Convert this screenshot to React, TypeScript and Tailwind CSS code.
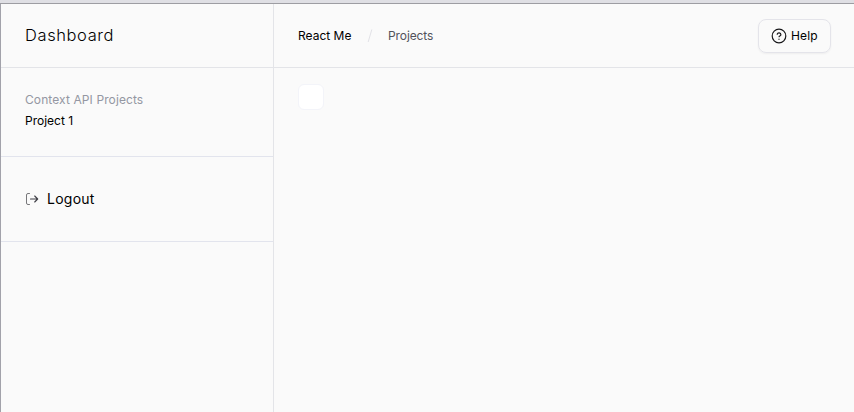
import React from "react";

function LogoutIcon() {
  return (
    <svg width="14" height="14" viewBox="0 0 14 14" fill="none" strokeLinecap="round" strokeLinejoin="round" className="shrink-0">
      <path d="M4.5 1.5H3a1.5 1.5 0 0 0-1.5 1.5v8A1.5 1.5 0 0 0 3 12.5h1.5" stroke="#77777a" />
      <path d="M5.5 7H12.7M9.7 4l3 3-3 3" stroke="#3f3f46" strokeWidth="1.1" />
    </svg>
  );
}

function HelpIcon() {
  return (
    <svg width="16" height="16" viewBox="0 0 16 16" fill="none" stroke="#18181b" strokeWidth="1.2" strokeLinecap="round" strokeLinejoin="round" className="shrink-0">
      <circle cx="8" cy="8" r="6.8" />
      <path d="M6.2 6.2a1.9 1.9 0 0 1 3.7.5c0 1.2-1.8 1.4-1.8 2" />
      <path d="M8 11.2v.1" />
    </svg>
  );
}

function Sidebar() {
  return (
    <aside className="flex w-[273px] shrink-0 flex-col border-r border-[#e3e4e8]">
      <header className="flex h-16 items-center border-b border-[#e3e4e8] pb-0.5 pl-6">
        <h1 className="text-[16.5px] leading-6 font-light tracking-[0.6px]">Dashboard</h1>
      </header>
      <nav className="h-[89px] border-b border-[#e2e4ed] pt-[21px] pl-6 text-[12px] leading-[21px]">
        <p className="tracking-[0.1px] text-[#9497a2]">Context API Projects</p>
        <a className="block">Project 1</a>
      </nav>
      <div className="flex h-[85px] items-center gap-2 border-b border-[#e2e4ed] pl-6">
        <LogoutIcon />
        <span className="text-[14px] leading-5 tracking-[0.25px]">Logout</span>
      </div>
    </aside>
  );
}

export default function App() {
  return (
    <div className="flex h-[412px] w-full flex-col overflow-hidden bg-[#fafafa] font-['Inter',sans-serif] font-normal text-black">
      <div className="h-1 shrink-0 border-b border-[#9d9da2] bg-[#dfdfe4]" />
      <div className="flex flex-1 border-l border-[#a2a2aa]">
        <Sidebar />
        <main className="flex-1">
          <header className="flex h-16 items-center justify-between border-b border-[#e3e4e8] pr-[23px] pl-6">
            <div className="flex items-center text-[12px] leading-5">
              <span className="w-[53px] whitespace-nowrap">React Me</span>
              <svg width="8" height="16" viewBox="0 0 8 16" className="mx-[14.5px]" fill="none" stroke="#e2e2e7">
                <path d="M5.8 1.5 2.2 14" />
              </svg>
              <span className="tracking-[-0.1px] whitespace-nowrap text-[#52525b]">Projects</span>
            </div>
            <button className="flex h-[34px] w-[73px] items-center gap-1 rounded-lg border border-[#e4e4ea] pl-3 text-[12px] shadow-xs">
              <HelpIcon />
              <span className="tracking-[0.15px]">Help</span>
            </button>
          </header>
          <div className="mt-4 ml-6 size-[26px] rounded-md border border-[#f3f4f9] bg-white" />
        </main>
      </div>
    </div>
  );
}
